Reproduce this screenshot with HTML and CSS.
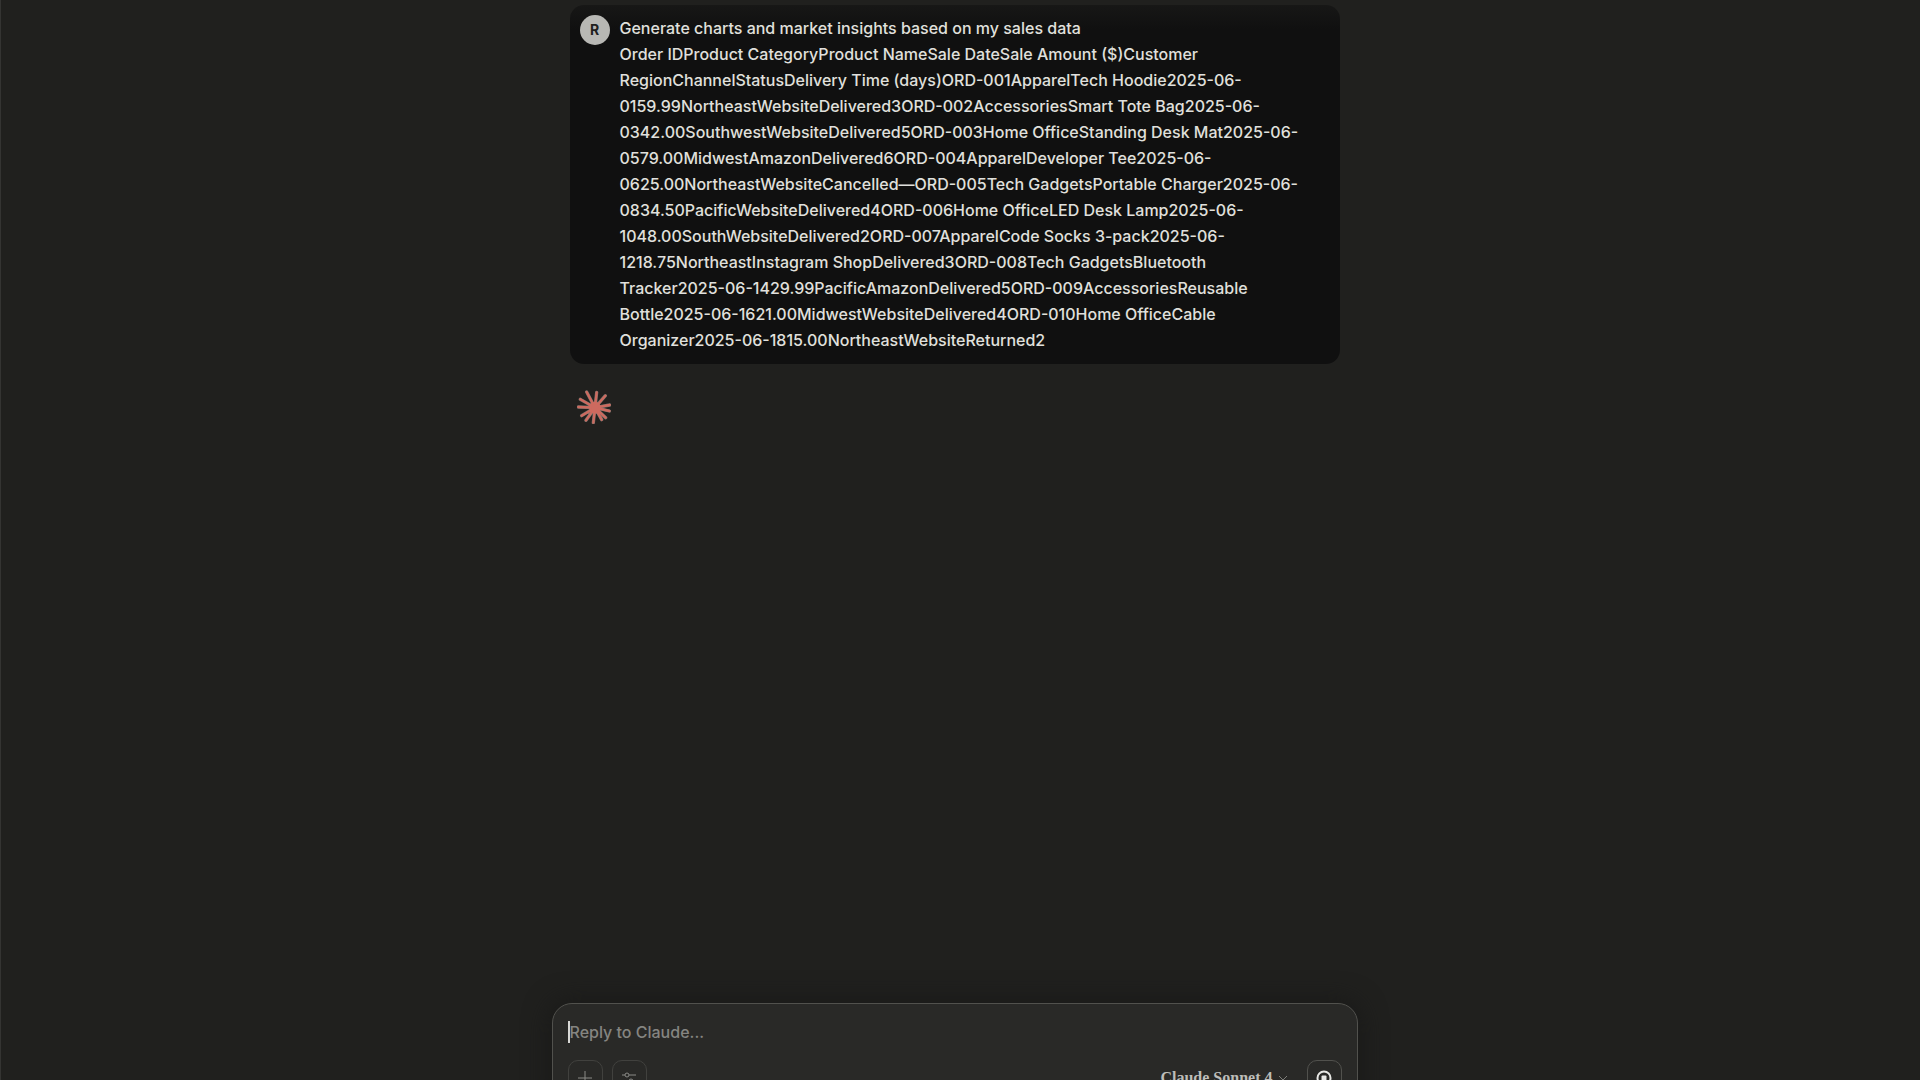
FILE: index.html
```html
<!DOCTYPE html>
<html lang="en">
<head>
<meta charset="utf-8">
<meta name="viewport" content="width=device-width, initial-scale=1">
<title>Claude</title>
<link rel="stylesheet" href="styles.css">
</head>
<body>
<div class="page">
  <main class="thread">
    <article class="message">
      <div class="avatar" aria-hidden="true">R</div>
      <p class="message-text">Generate charts and market insights based on my sales data<br>
Order IDProduct CategoryProduct NameSale DateSale Amount ($)Customer<br>
RegionChannelStatusDelivery Time (days)ORD-001ApparelTech Hoodie2025-06-<br>
0159.99NortheastWebsiteDelivered3ORD-002AccessoriesSmart Tote Bag2025-06-<br>
0342.00SouthwestWebsiteDelivered5ORD-003Home OfficeStanding Desk Mat2025-06-<br>
0579.00MidwestAmazonDelivered6ORD-004ApparelDeveloper Tee2025-06-<br>
0625.00NortheastWebsiteCancelled—ORD-005Tech GadgetsPortable Charger2025-06-<br>
0834.50PacificWebsiteDelivered4ORD-006Home OfficeLED Desk Lamp2025-06-<br>
1048.00SouthWebsiteDelivered2ORD-007ApparelCode Socks 3-pack2025-06-<br>
1218.75NortheastInstagram ShopDelivered3ORD-008Tech GadgetsBluetooth<br>
Tracker2025-06-1429.99PacificAmazonDelivered5ORD-009AccessoriesReusable<br>
Bottle2025-06-1621.00MidwestWebsiteDelivered4ORD-010Home OfficeCable<br>
Organizer2025-06-1815.00NortheastWebsiteReturned2</p>
    </article>
    <div class="reply">
      <svg class="spark" viewBox="51 0 102 102" role="img" aria-label="Claude is responding">
        <g class="spark-halo">
          <path d="M105 53 80 6M105 53 110 7M105 53 136 17M105 53 149 45M105 53 148 63M105 53 137 83M105 53 125 89M105 53 100 98M105 53 78 91M105 53 65 77M105 53 55 51M105 53 61 28"/>
        </g>
        <g class="spark-rays">
          <path d="M105 53 80 6M105 53 110 7M105 53 136 17M105 53 149 45M105 53 148 63M105 53 137 83M105 53 125 89M105 53 100 98M105 53 78 91M105 53 65 77M105 53 55 51M105 53 61 28"/>
          <circle cx="105" cy="53" r="14"/>
        </g>
      </svg>
    </div>
  </main>
  <form class="composer">
    <input class="prompt" type="text" placeholder="Reply to Claude..." aria-label="Reply to Claude">
    <div class="toolbar">
      <button class="tool" type="button" aria-label="Add content">
        <svg viewBox="0 0 16 16"><path d="M8 1v14M1 8h14"/></svg>
      </button>
      <button class="tool" type="button" aria-label="Search and tools">
        <svg viewBox="0 0 16 16"><path d="M1 5h3M8 5h7M1 11h7M12 11h3"/><circle cx="6" cy="5" r="2"/><circle cx="10" cy="11" r="2"/></svg>
      </button>
      <button class="model" type="button">Claude Sonnet 4
        <svg viewBox="0 0 10 6"><path d="m1 1 4 4 4-4"/></svg>
      </button>
      <button class="tool stop" type="button" aria-label="Stop response">
        <svg viewBox="0 0 16 16"><circle cx="8" cy="8" r="6.5"/><rect x="5.5" y="5.5" width="5" height="5" rx="1"/></svg>
      </button>
    </div>
  </form>
</div>
</body>
</html>
```
FILE: styles.css
```css
* { box-sizing: border-box; }

body {
  margin: 0;
  background: #20201e;
  color: #e0e0dd;
  font: 500 16px/26px Inter, "Liberation Sans", sans-serif;
}

.page {
  height: 100vh;
  overflow: hidden;
  padding-right: 12px;
  border-left: 1px solid #343432;
  display: flex;
  flex-direction: column;
  align-items: center;
}

.thread {
  width: 100%;
  max-width: 770px;
  flex: none;
  min-height: calc(100vh - 77px);
  padding-top: 5px;
}

.message {
  display: flex;
  gap: 10px;
  padding: 10px 10px 11px;
  border-radius: 14px;
  background: linear-gradient(#171716, #101010 24px);
}

.avatar {
  flex: none;
  width: 30px;
  height: 30px;
  border-radius: 50%;
  background: #b8b8b4;
  color: #20201e;
  font-size: 14px;
  font-weight: 700;
  line-height: 30px;
  text-align: center;
}

.message-text { margin: 0; }

.reply { padding: 26px 7px; }

.spark {
  display: block;
  width: 34px;
  height: 34px;
}

.spark-halo { stroke: #77706a; stroke-width: 10; stroke-linecap: round; }
.spark-rays { stroke: #cd6a5f; stroke-width: 7; stroke-linecap: round; fill: #cd6a5f; }

.composer {
  flex: none;
  width: 100%;
  max-width: 806px;
  padding: 17px 15px 15px;
  border: 1px solid #51514d;
  border-radius: 20px;
  background: #292927;
  box-shadow: 0 0 24px 4px #1a1a19;
}

.prompt {
  display: block;
  width: 100%;
  height: 22px;
  margin: 0 0 17px;
  padding: 0;
  border: 0;
  border-left: 2px solid #d8d8d5;
  outline: 0;
  background: none;
  color: inherit;
  font: inherit;
}

.prompt::placeholder { color: #858581; opacity: 1; }

.toolbar {
  display: flex;
  align-items: center;
  gap: 9px;
}

.tool {
  display: grid;
  place-items: center;
  width: 35px;
  height: 35px;
  padding: 0;
  border: 1px solid #41413e;
  border-radius: 10px;
  background: none;
  color: #8b8b87;
}

.tool svg { width: 16px; height: 16px; }

svg {
  fill: none;
  stroke: currentColor;
}

.stop { border-color: #51514d; color: #e8e8e5; }
.stop svg { stroke-width: 2; }
.stop rect { fill: currentColor; stroke: none; }

.model {
  display: flex;
  align-items: center;
  gap: 5px;
  margin-left: auto;
  margin-right: 10px;
  padding: 0;
  border: 0;
  background: none;
  color: #bdbdb9;
  font: 700 16px/22px "Liberation Serif", serif;
}

.model svg { width: 10px; height: 6px; color: #7d7d79; }
```
